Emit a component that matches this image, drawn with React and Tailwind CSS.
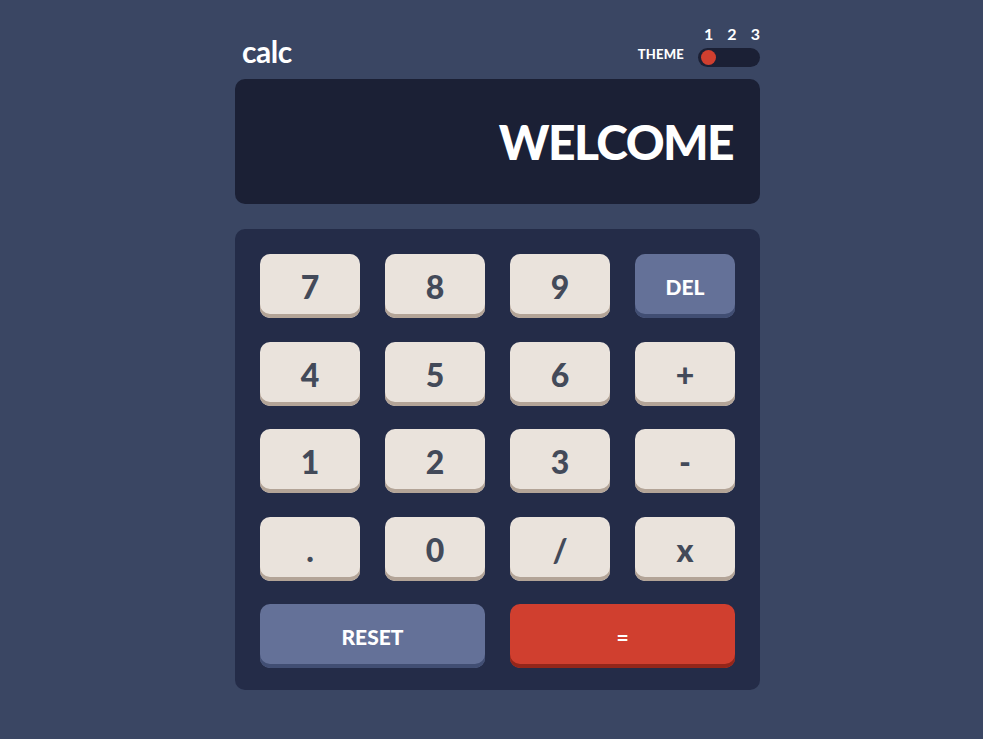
import React from "react";

const keys = [
  { label: "7" },
  { label: "8" },
  { label: "9" },
  { label: "DEL", kind: "blue" },
  { label: "4" },
  { label: "5" },
  { label: "6" },
  { label: "+" },
  { label: "1" },
  { label: "2" },
  { label: "3" },
  { label: "-" },
  { label: "." },
  { label: "0" },
  { label: "/" },
  { label: "x" },
];

const Key = ({ label, kind }) => {
  if (kind === "blue") {
    return (
      <button className="h-[64px] rounded-[10px] bg-[#647198] shadow-[inset_0_-4px_0_#414e73] text-white text-[21px] font-black pt-[2px]">
        {label}
      </button>
    );
  }
  return (
    <button className="h-[64px] rounded-[10px] bg-[#eae3dc] shadow-[inset_0_-4px_0_#b3a497] text-[#434a59] text-[32px] font-black pt-[2px]">
      {label}
    </button>
  );
};

const App = () => {
  return (
    <div
      className="min-h-screen w-full bg-[#3a4663] flex justify-center pt-[24px] pl-[12px]"
      style={{ fontFamily: '"Lato", "Open Sans", sans-serif' }}
    >
      <div className="w-[525px] flex flex-col">
        <header className="flex items-end justify-between h-[43px] pl-[7px]">
          <h1 className="text-white text-[30px] font-bold leading-none mb-[1px] tracking-[-0.5px]">
            calc
          </h1>
          <div className="flex items-end gap-[14px]">
            <span className="text-white text-[13px] font-black tracking-[0.2px] mb-[3px]">
              THEME
            </span>
            <div className="flex flex-col gap-[6px]">
              <div className="flex justify-between pl-[6px] pr-0 text-white text-[16px] font-bold leading-none">
                <span>1</span>
                <span>2</span>
                <span>3</span>
              </div>
              <div className="w-[62px] h-[19px] rounded-full bg-[#1b2035] flex items-center px-[3px]">
                <div className="w-[15px] h-[15px] rounded-full bg-[#d03f2f]" />
              </div>
            </div>
          </div>
        </header>

        <div className="mt-[12px] h-[125px] rounded-[10px] bg-[#1b2035] flex items-center justify-end px-[27px]">
          <span className="text-white text-[48px] font-black leading-none tracking-[-1.6px]">
            WELCOME
          </span>
        </div>

        <div className="mt-[25px] rounded-[10px] bg-[#242c48] px-[25px] pt-[25px] pb-[22px]">
          <div className="grid grid-cols-4 gap-x-[25px] gap-y-[23.5px]">
            {keys.map((k) => (
              <Key key={k.label} {...k} />
            ))}
            <button className="col-span-2 h-[64px] rounded-[10px] bg-[#647198] shadow-[inset_0_-4px_0_#414e73] text-white text-[21px] font-black pt-[2px]">
              RESET
            </button>
            <button className="col-span-2 h-[64px] rounded-[10px] bg-[#d03f2f] shadow-[inset_0_-4px_0_#93261a] text-white text-[21px] font-black pt-[2px]">
              =
            </button>
          </div>
        </div>
      </div>
    </div>
  );
};

export default App;
